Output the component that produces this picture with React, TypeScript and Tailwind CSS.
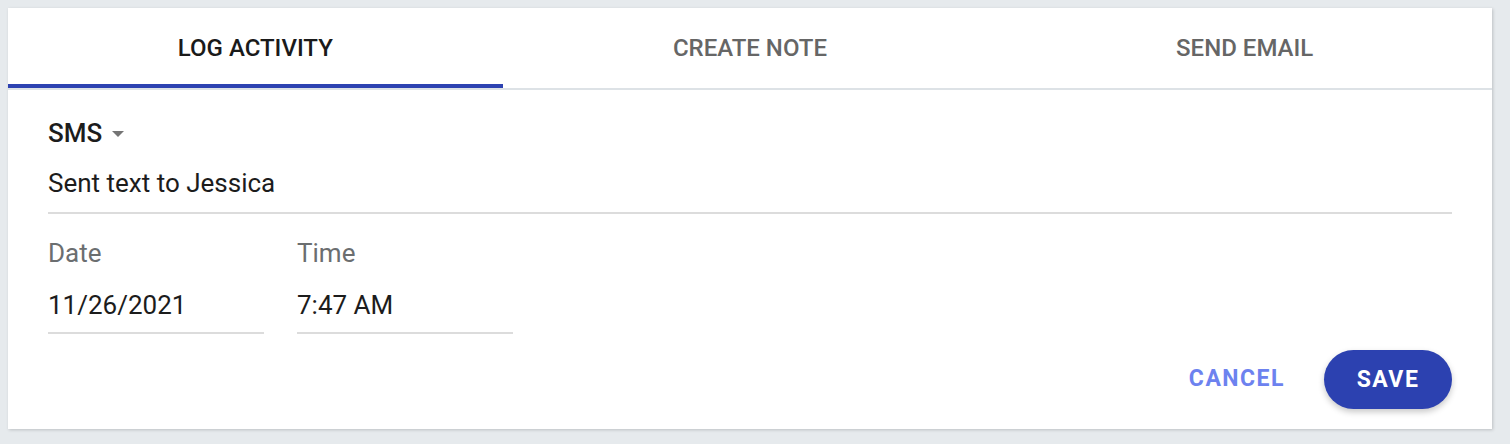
import React, { useState } from 'react';

const tabs = ['Log Activity', 'Create Note', 'Send Email'];

const Field: React.FC<{ label: string; value: string }> = ({ label, value }) => (
  <div className="w-[216px]">
    <div className="leading-[30px] text-[#6b6e70]">{label}</div>
    <div className="mt-[22px] pb-[12px] border-b-2 border-[#dcdcdc] leading-[30px] text-[#1c1c1c]">
      {value}
    </div>
  </div>
);

const App: React.FC = () => {
  const [active, setActive] = useState(0);

  return (
    <div className="min-h-screen bg-[#e6eaed] p-2 font-['Roboto','Liberation_Sans',sans-serif]">
      <div className="w-[1484px] bg-white shadow-[1px_1px_3px_rgba(0,0,0,0.18)]">
        {/* Tabs */}
        <div className="flex border-b-2 border-[#dde2e6]">
          {tabs.map((tab, i) => (
            <button
              key={tab}
              onClick={() => setActive(i)}
              className={`relative flex-1 h-20 text-[24px] font-medium uppercase ${
                active === i ? 'text-[#1a1a1a]' : 'text-[#666666]'
              }`}
            >
              {tab}
              {active === i && (
                <span className="absolute left-0 right-0 bottom-0 h-1 bg-[#2d42b1]" />
              )}
            </button>
          ))}
        </div>

        {/* Form */}
        <div className="px-10 pt-[28px] pb-5 text-[26px]">
          <div className="flex items-center gap-[10px] leading-[30px] font-medium text-[#1c1c1c]">
            SMS
            <svg width="12" height="6" viewBox="0 0 12 6" className="mt-[2px]">
              <path d="M0 0h12L6 6z" fill="#757575" />
            </svg>
          </div>
          <div className="mt-[20px] pb-[14px] border-b-2 border-[#dcdcdc] leading-[30px] text-[#1c1c1c]">
            Sent text to Jessica
          </div>

          <div className="mt-[24px] flex gap-[33px]">
            <Field label="Date" value="11/26/2021" />
            <Field label="Time" value="7:47 AM" />
          </div>

          <div className="mt-[16px] flex items-center justify-end gap-[39px]">
            <button className="text-[23px] font-bold uppercase tracking-[1.5px] text-[#6d82ef]">
              Cancel
            </button>
            <button className="h-[59px] w-[128px] pt-[2px] rounded-full bg-[#2c41b0] text-[23px] font-bold uppercase tracking-[1.5px] text-white shadow-[0_3px_6px_rgba(0,0,0,0.22)]">
              Save
            </button>
          </div>
        </div>
      </div>
    </div>
  );
};

export default App;
